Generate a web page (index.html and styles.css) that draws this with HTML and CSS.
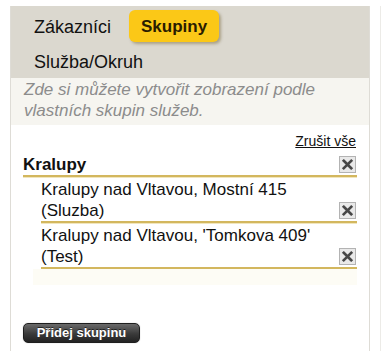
FILE: index.html
```html
<!DOCTYPE html>
<html lang="cs">
<head>
<meta charset="utf-8">
<link rel="stylesheet" href="styles.css">
</head>
<body>
<div class="layout">
  <div class="panel">
    <div class="tabs">
      <ul class="tab-list">
        <li class="tab">Zákazníci</li>
        <li class="tab active">Skupiny</li>
        <li class="tab">Služba/Okruh</li>
      </ul>
    </div>
    <p class="desc">Zde si můžete vytvořit zobrazení podle vlastních skupin služeb.</p>
    <div class="content">
      <div class="clear-row"><a class="clear-all" href="#">Zrušit vše</a></div>
      <div class="group-row">
        <span class="group-name">Kralupy</span>
        <span class="xbtn"><svg viewBox="0 0 16 16" width="16" height="16"><path d="M4 4 L12 12 M12 4 L4 12" stroke="#474747" stroke-width="2.8" stroke-linecap="square"/></svg></span>
      </div>
      <div class="items">
        <div class="item-row">
          <span class="item-name">Kralupy nad Vltavou, Mostní 415 (Sluzba)</span>
          <span class="xbtn"><svg viewBox="0 0 16 16" width="16" height="16"><path d="M4 4 L12 12 M12 4 L4 12" stroke="#474747" stroke-width="2.8" stroke-linecap="square"/></svg></span>
        </div>
        <div class="item-row">
          <span class="item-name">Kralupy nad Vltavou, 'Tomkova 409' (Test)</span>
          <span class="xbtn"><svg viewBox="0 0 16 16" width="16" height="16"><path d="M4 4 L12 12 M12 4 L4 12" stroke="#474747" stroke-width="2.8" stroke-linecap="square"/></svg></span>
        </div>
        <div class="items-foot"></div>
      </div>
      <div class="actions">
        <button class="add-btn">Přidej skupinu</button>
      </div>
    </div>
  </div>
  <div class="side"></div>
</div>
</body>
</html>
```

FILE: styles.css
```css
html, body {
  margin: 0;
  padding: 0;
  background: #ffffff;
  font-family: "Liberation Sans", Arial, sans-serif;
  color: #111;
}

.layout {
  display: flex;
  padding: 6px 0 0 10px;
  height: 345px;
  overflow: hidden;
}

.panel {
  width: 358px;
  border-left: 1px solid #dedcd6;
  border-right: 1px solid #dedcd6;
  display: flex;
  flex-direction: column;
}

.side {
  margin-left: 10px;
  border-left: 1px solid #ecebe7;
  flex: 1;
}

.tabs {
  background: #dbd8cf;
  padding: 4px 0 1px 11px;
}

.tab-list {
  list-style: none;
  margin: 0;
  padding: 0;
  display: flex;
  flex-wrap: wrap;
  width: 240px;
  row-gap: 3px;
  column-gap: 6px;
}

.tab {
  font-size: 18px;
  line-height: 22px;
  padding: 6px 12px 4px;
  color: #111;
}

.tab.active {
  background: #fbc817;
  color: #2a1c00;
  font-weight: bold;
  font-size: 17px;
  border-radius: 6px;
  box-shadow: 2px 2px 3px rgba(80, 60, 0, 0.35);
}

.desc {
  margin: 0;
  background: #f6f5f0;
  padding: 1px 12px 4px 13px;
  font-size: 17px;
  line-height: 21px;
  font-style: italic;
  color: #8c8c8c;
}

.content {
  padding: 0 12px;
  display: flex;
  flex-direction: column;
  flex: 1;
}

.clear-row {
  display: flex;
  justify-content: flex-end;
  padding-top: 8px;
  padding-right: 1px;
}

.clear-all {
  font-size: 14px;
  line-height: 17px;
  color: #111;
  text-decoration: underline;
}

.group-row {
  display: flex;
  justify-content: space-between;
  align-items: center;
  margin-top: 4px;
  border-bottom: 2px solid #d3b75e;
  box-shadow: 0 1px 0 #f1e6bd;
  padding-right: 1px;
}

.group-name {
  font-size: 17px;
  line-height: 21px;
  font-weight: bold;
}

.items {
  margin-left: 18px;
  margin-top: 2px;
}

.item-row {
  display: flex;
  justify-content: space-between;
  align-items: flex-end;
  border-bottom: 2px solid #d3b75e;
  box-shadow: 0 1px 0 #f1e6bd;
  margin-bottom: 2px;
  padding-right: 1px;
}

.item-name {
  font-size: 17px;
  line-height: 21px;
  width: 290px;
}

.item-row .xbtn {
  margin-bottom: 2px;
}

.xbtn {
  width: 15px;
  height: 15px;
  border: 1px solid #b3b3b3;
  background: #e9e9e9;
  display: flex;
  align-items: center;
  justify-content: center;
}

.xbtn svg {
  width: 15px;
  height: 15px;
}

.items-foot {
  margin-left: -8px;
  height: 16px;
  background: #fdfcf5;
  margin-top: -2px;
}

.actions {
  margin-top: auto;
  padding-bottom: 8px;
}

.add-btn {
  font-family: "Liberation Sans", Arial, sans-serif;
  font-size: 13px;
  font-weight: bold;
  color: #ffffff;
  background: linear-gradient(#6a6a6a, #3a3a3a 55%, #222 100%);
  border: 1px solid #1e1e1e;
  border-radius: 5px;
  height: 20px;
  width: 117px;
  padding: 0;
  line-height: 18px;
  box-shadow: 0 0 1px rgba(0,0,0,0.4);
  text-shadow: 0 -1px 0 rgba(0,0,0,0.6);
}
```
